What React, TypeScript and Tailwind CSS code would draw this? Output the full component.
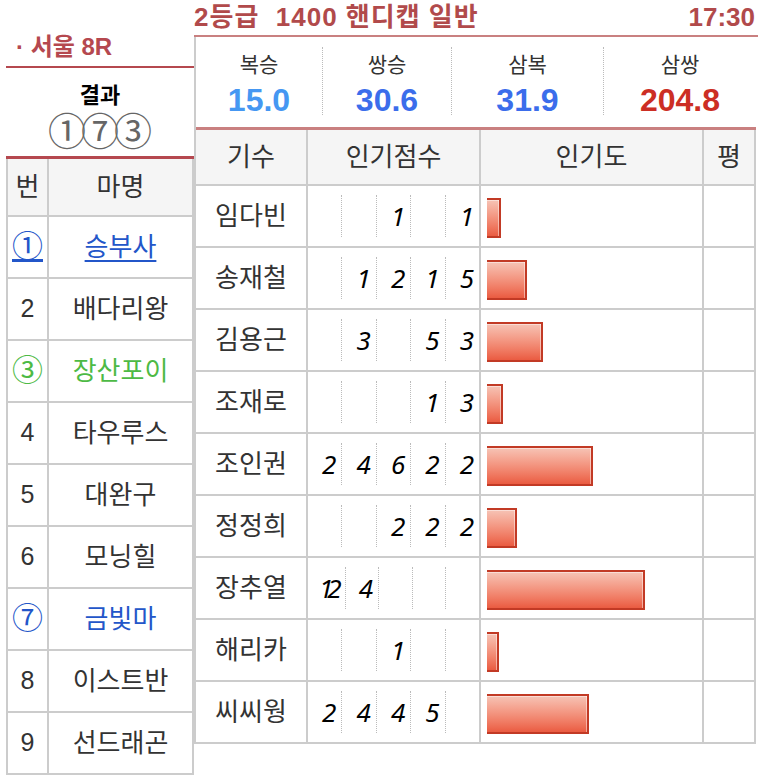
import React from 'react';

interface Horse {
  no: string;
  name: string;
  tone?: 'blue' | 'green';
  link?: boolean;
}

interface Jockey {
  name: string;
  scores: string[];
  bar: number;
}

const horses: Horse[] = [
  { no: '①', name: '승부사', tone: 'blue', link: true },
  { no: '2', name: '배다리왕' },
  { no: '③', name: '장산포이', tone: 'green' },
  { no: '4', name: '타우루스' },
  { no: '5', name: '대완구' },
  { no: '6', name: '모닝힐' },
  { no: '⑦', name: '금빛마', tone: 'blue' },
  { no: '8', name: '이스트반' },
  { no: '9', name: '선드래곤' },
];

const jockeys: Jockey[] = [
  { name: '임다빈', scores: ['', '', '1', '', '1'], bar: 14 },
  { name: '송재철', scores: ['', '1', '2', '1', '5'], bar: 40 },
  { name: '김용근', scores: ['', '3', '', '5', '3'], bar: 56 },
  { name: '조재로', scores: ['', '', '', '1', '3'], bar: 16 },
  { name: '조인권', scores: ['2', '4', '6', '2', '2'], bar: 106 },
  { name: '정정희', scores: ['', '', '2', '2', '2'], bar: 30 },
  { name: '장추열', scores: ['12', '4', '', '', ''], bar: 158 },
  { name: '해리카', scores: ['', '', '1', '', ''], bar: 12 },
  { name: '씨씨웡', scores: ['2', '4', '4', '5', ''], bar: 102 },
];

const odds = [
  { label: '복승', value: '15.0', cls: 'w-[127px] text-[#4597f2]' },
  { label: '쌍승', value: '30.6', cls: 'w-[129px] text-[#3b6deb]' },
  { label: '삼복', value: '31.9', cls: 'w-[152px] text-[#3b6deb]' },
  { label: '삼쌍', value: '204.8', cls: 'flex-1 text-[#cc2e24] border-r-0' },
];

function toneClass(h: Horse) {
  if (h.tone === 'blue') return 'text-[#2356c9]';
  if (h.tone === 'green') return 'text-[#4dba45]';
  return 'text-[#333]';
}

function App() {
  return (
    <div className="w-[758px] h-[780px] bg-white flex font-['Liberation_Sans','Noto_Sans_CJK_KR',sans-serif] text-[#333]">
      {/* left: race + horses */}
      <div className="ml-[6px] w-[188px] flex flex-col">
        <div className="mt-[29px] h-[39px] border-b-2 border-[#b5484f] text-[24px] font-bold leading-[36px] text-[#b5484f] pl-[10px]">
          · 서울 8R
        </div>
        <div className="h-[91px] border-b-[3px] border-[#b5484f] flex flex-col items-center pt-[14px]">
          <div className="text-[22px] font-bold leading-[28px] text-black">결과</div>
          <div className="mt-[3px] text-[38px] leading-[38px] text-[#666] tracking-[-5px] pr-[5px]">①⑦③</div>
        </div>
        <div className="border-x-2 border-[#ccc]">
          <div className="flex h-[58px] border-b-2 border-[#ccc] bg-[#f5f5f5] text-[26px]">
            <div className="w-[41px] border-r-2 border-[#ccc] flex items-center justify-center">번</div>
            <div className="flex-1 flex items-center justify-center">마명</div>
          </div>
          {horses.map((h) => (
            <div key={h.name} className={`flex h-[62px] border-b-2 border-[#ccc] ${toneClass(h)}`}>
              <div
                className={`w-[41px] border-r-2 border-[#ccc] flex items-center justify-center ${
                  h.no > '9' ? 'text-[31px]' : 'text-[25px]'
                } ${h.link ? 'underline underline-offset-[2px]' : ''}`}
              >
                {h.no}
              </div>
              <div
                className={`flex-1 flex items-center justify-center text-[26px] ${
                  h.link ? 'underline underline-offset-[4px]' : ''
                }`}
              >
                {h.name}
              </div>
            </div>
          ))}
        </div>
      </div>

      {/* right: race info + jockeys */}
      <div className="flex-1 flex flex-col">
        <div className="h-[37px] border-b-2 border-[#c98080] flex items-center justify-between pr-[3px] text-[26px] font-bold text-[#b14a4b] leading-[35px]">
          <span className="whitespace-pre tracking-[1px]">2등급  1400 핸디캡 일반</span>
          <span>17:30</span>
        </div>
        <div className="border-l-2 border-[#ccc] w-[562px]">
          <div className="h-[93px] border-b-[3px] border-[#c98080] flex items-start pt-[10px]">
            {odds.map((o) => (
              <div
                key={o.label}
                className={`h-[68px] border-r border-dotted border-[#bbb] flex flex-col items-center ${o.cls}`}
              >
                <div className="mt-[6px] text-[21px] leading-[24px] text-[#333]">{o.label}</div>
                <div className="mt-[5px] text-[32px] font-bold leading-[36px]">{o.value}</div>
              </div>
            ))}
          </div>
          <div className="w-[560px] border-r-2 border-[#ccc]">
            <div className="flex h-[56px] border-b-2 border-[#ccc] bg-[#f5f5f5] text-[26px]">
              <div className="w-[112px] border-r-2 border-[#ccc] flex items-center justify-center">기수</div>
              <div className="w-[173px] border-r-2 border-[#ccc] flex items-center justify-center">인기점수</div>
              <div className="w-[223px] border-r-2 border-[#ccc] flex items-center justify-center">인기도</div>
              <div className="flex-1 flex items-center justify-center">평</div>
            </div>
            {jockeys.map((j) => (
              <div key={j.name} className="flex h-[62px] border-b-2 border-[#ccc]">
                <div className="w-[112px] border-r-2 border-[#ccc] flex items-center justify-center text-[26px]">
                  {j.name}
                </div>
                <div className="w-[173px] border-r-2 border-[#ccc] flex items-center">
                  {j.scores.map((s, i) => (
                    <div
                      key={i}
                      className={`flex-1 h-[42px] flex items-center justify-end font-['Noto_Sans',sans-serif] italic text-[26px] text-black ${
                        i < 4 ? 'border-r border-dotted border-[#bbb]' : ''
                      } ${s.length > 1 ? 'tracking-[-6px] pr-[9px]' : 'pr-[5px]'}`}
                    >
                      {s}
                    </div>
                  ))}
                </div>
                <div className="w-[223px] border-r-2 border-[#ccc] flex items-center pl-[6px] pt-[3px]">
                  <div
                    className="h-[40px] border-2 border-l-0 border-[#c23a25] bg-linear-to-b from-[#f6c3b5] to-[#ea5b41] shadow-[inset_-1px_0_0_rgba(255,255,255,0.45),inset_0_1px_0_rgba(255,255,255,0.45)]"
                    style={{ width: j.bar }}
                  />
                </div>
                <div className="flex-1" />
              </div>
            ))}
          </div>
        </div>
      </div>
    </div>
  );
}

export default App;
